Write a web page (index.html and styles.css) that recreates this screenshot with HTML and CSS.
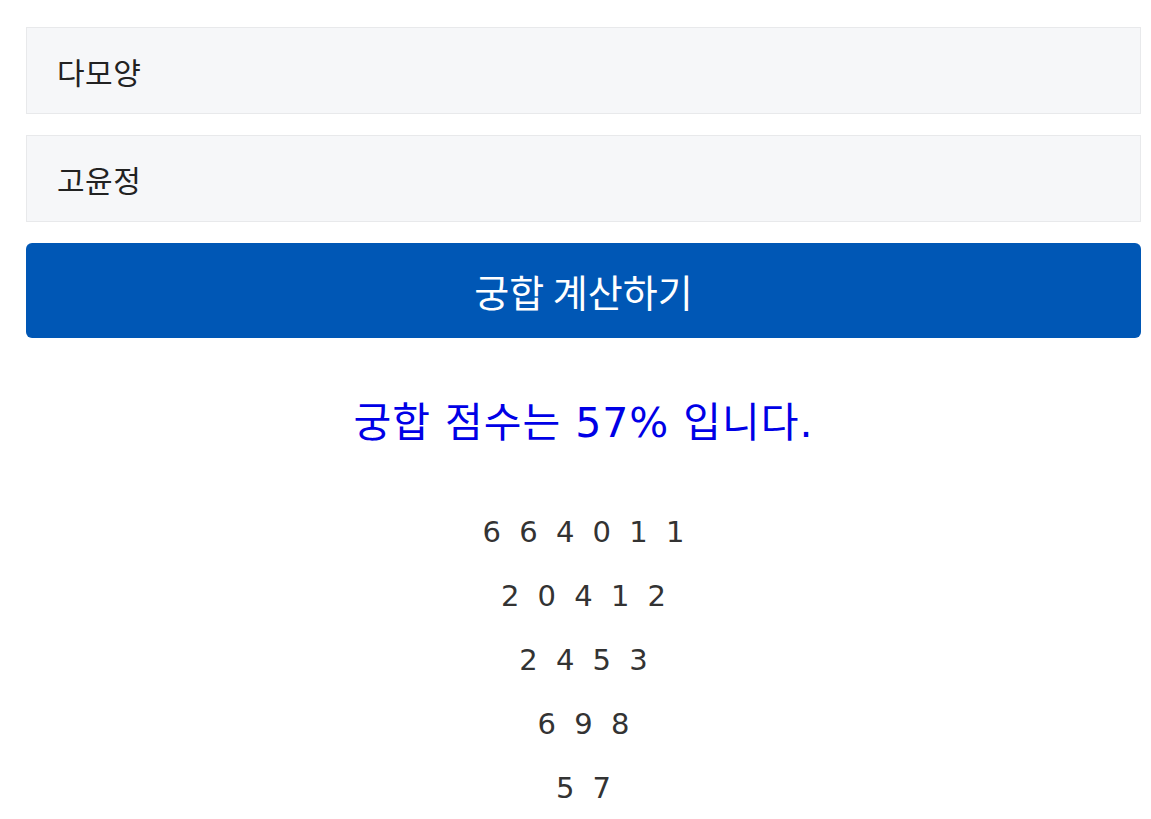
FILE: index.html
```html
<!DOCTYPE html>
<html>
<head>
    <title>이름 궁합</title>
    <link rel="stylesheet" href="styles.css">
</head>
<body>
    <div class="wrap">
        <input type="text" class="name-input" id="name1" value="다모양">
        <input type="text" class="name-input" id="name2" value="고윤정">
        <button class="calc-btn" onclick="calc()">궁합 계산하기</button>

        <div id="result" class="result">궁합 점수는 57% 입니다.</div>

        <div id="steps" class="steps">
            <p>6 6 4 0 1 1</p>
            <p>2 0 4 1 2</p>
            <p>2 4 5 3</p>
            <p>6 9 8</p>
            <p>5 7</p>
        </div>
    </div>
</body>
</html>
```

FILE: styles.css
```css
body { margin: 0; font-family: "DejaVu Sans", "Noto Sans CJK KR", sans-serif; background: #fff; }
.wrap { margin: 27px 10px 0 26px; display: flex; flex-direction: column; gap: 21px; }
.name-input { height: 87px; padding: 0 30px; box-sizing: border-box; border: 1px solid #e8e9eb; background: #f6f7f9; font-family: "Noto Sans CJK KR", sans-serif; font-size: 30px; letter-spacing: 0.5px; color: #222; outline: none; }
.calc-btn { height: 95px; border: none; border-radius: 6px; background: #0057b5; color: #fff; font-family: "Noto Sans CJK KR", sans-serif; font-size: 38px; cursor: pointer; }
.result { margin-top: 42px; text-align: center; color: #0000e6; font-size: 41px; letter-spacing: 1px; line-height: 44px; }
.steps { margin-top: 34px; text-align: center; color: #333; font-size: 29px; word-spacing: 9px; }
.steps p { margin: 0; line-height: 64px; }
```
